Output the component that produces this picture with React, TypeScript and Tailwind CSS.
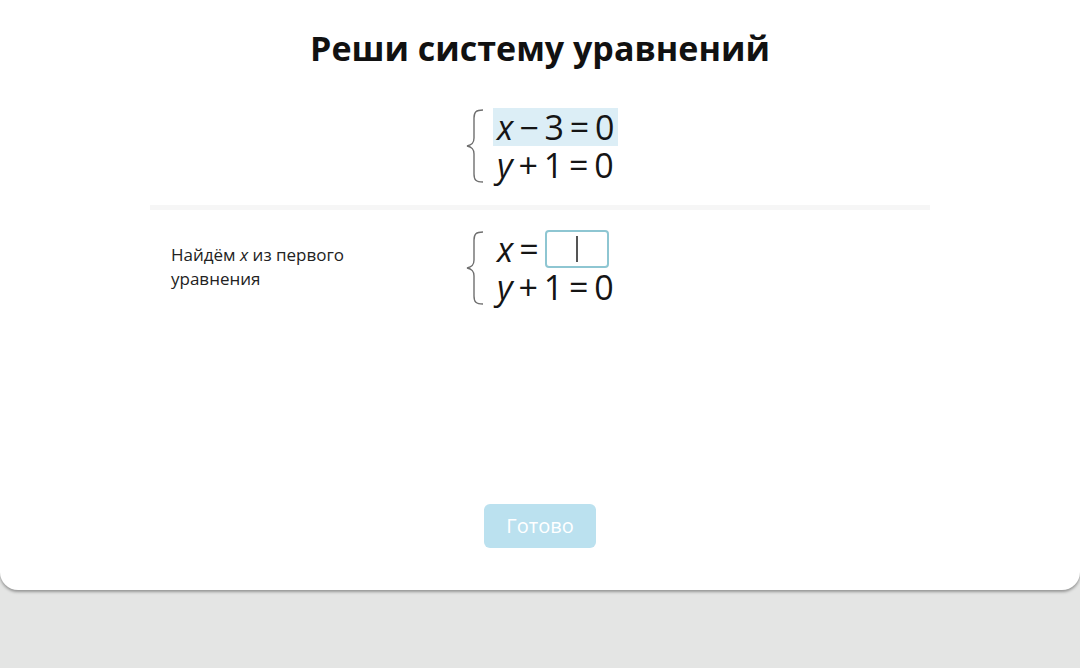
import React from "react";

const Brace = () => (
  <svg width="22" height="76" viewBox="0 0 22 76" className="shrink-0">
    <path
      d="M19 2 C12 2 10 4 10 10 L10 30 C10 35 8 37 3 38 C8 39 10 41 10 46 L10 66 C10 72 12 74 19 74"
      fill="none"
      stroke="#6f6f6f"
      strokeWidth="1.4"
    />
  </svg>
);

export default function App() {
  const eq = "text-[34px] leading-[38px] text-[#151515] [word-spacing:-3px]";
  return (
    <div className="w-[1080px] h-[668px] bg-[#e4e5e4] overflow-hidden" style={{ fontFamily: '"Open Sans", "Noto Sans", sans-serif' }}>
      <div className="h-[590px] bg-white rounded-b-[18px] shadow-[0_2px_3px_rgba(0,0,0,0.35)] flex flex-col items-center">
        <h1 className="mt-[26px] text-[34px] leading-[44px] font-bold text-[#111]">Реши систему уравнений</h1>

        <div className="w-[780px] mt-[38px] flex">
          <div className="w-[314px]" />
          <div className="flex items-center gap-[11px]">
            <Brace />
            <div className="flex flex-col">
              <div className={`${eq} bg-[#dceef6] px-[4px] -ml-[4px]`}>
                <i>x</i> − 3 = 0
              </div>
              <div className={eq}>
                <i>y</i> + 1 = 0
              </div>
            </div>
          </div>
        </div>

        <div className="w-[780px] h-[5px] bg-[#f6f6f6] mt-[21px]" />

        <div className="w-[780px] mt-[20px] flex">
          <div className="w-[314px] pl-[21px] pt-[13px] text-[17px] leading-[24px] text-[#222]">
            <div>Найдём <i>x</i> из первого</div>
            <div>уравнения</div>
          </div>
          <div className="flex items-center gap-[11px]">
            <Brace />
            <div className="flex flex-col">
              <div className={`${eq} flex items-center`}>
                <span><i>x</i> =</span>
                <span className="ml-[6px] w-[64px] h-[38px] border-2 border-[#8ec6d2] rounded-[4px] flex items-center justify-center">
                  <span className="w-[2px] h-[26px] bg-[#555]" />
                </span>
              </div>
              <div className={eq}>
                <i>y</i> + 1 = 0
              </div>
            </div>
          </div>
        </div>

        <div className="flex-1" />
        <button className="mb-[42px] w-[112px] h-[44px] rounded-[6px] bg-[#bbe1ef] text-white text-[20px]">Готово</button>
      </div>
    </div>
  );
}
